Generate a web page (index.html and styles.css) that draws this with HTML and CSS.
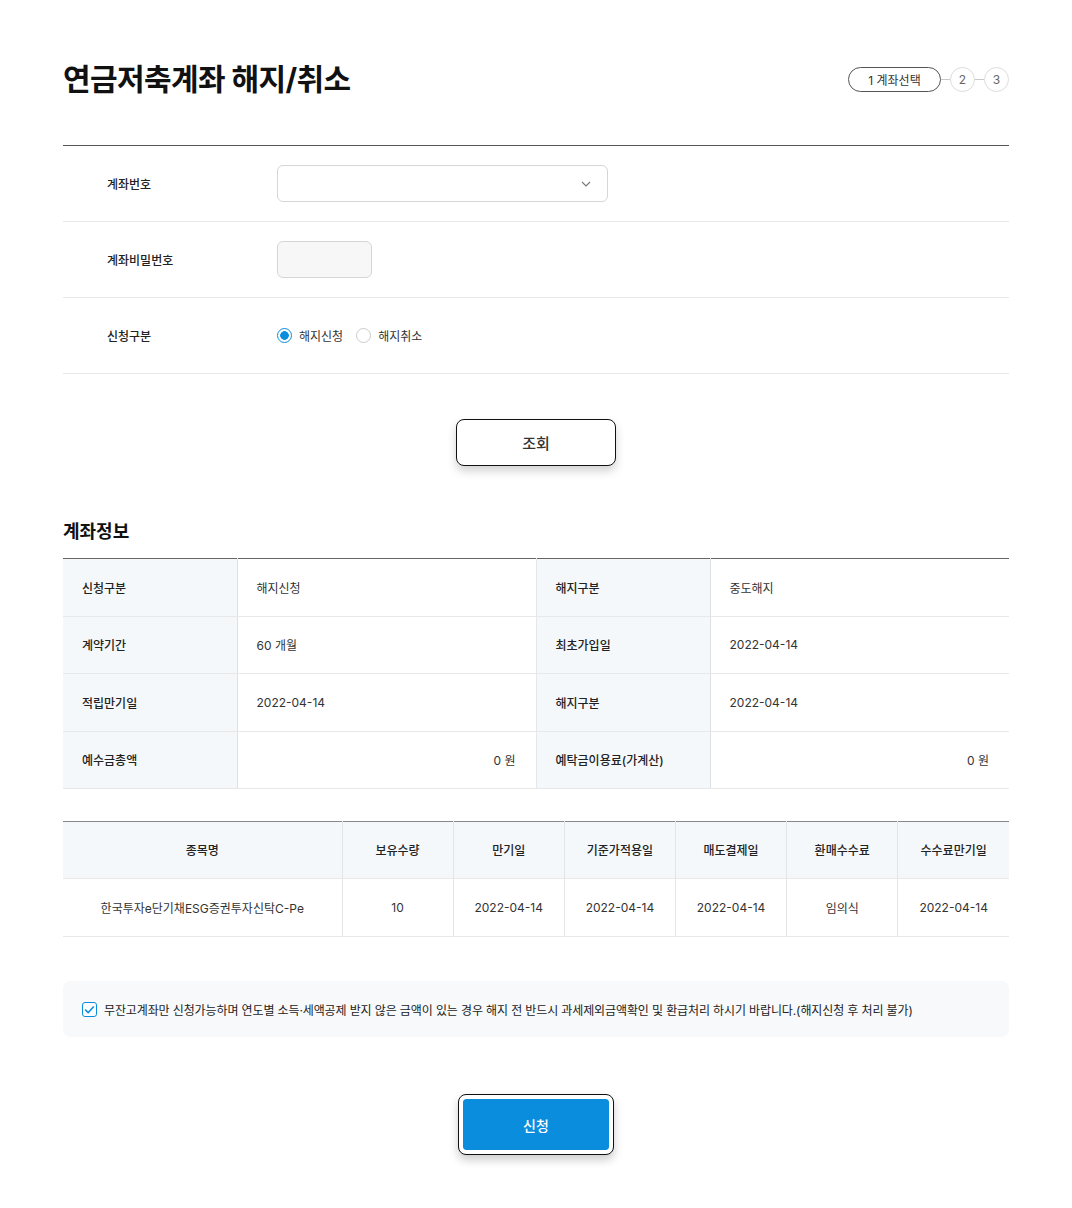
FILE: index.html
```html
<!DOCTYPE html>
<html lang="ko">
<head>
<meta charset="utf-8">
<title>연금저축계좌 해지/취소</title>
<link rel="stylesheet" href="styles.css">
</head>
<body>
<div class="page">
  <div class="header">
    <h1 class="title">연금저축계좌 해지/취소</h1>
    <div class="steps">
      <span class="step-pill">1 계좌선택</span>
      <span class="step-line"></span>
      <span class="step-circle">2</span>
      <span class="step-line"></span>
      <span class="step-circle">3</span>
    </div>
  </div>

  <div class="form">
    <div class="form-row">
      <div class="form-label">계좌번호</div>
      <div class="form-field">
        <div class="select">
          <svg class="chev" width="10" height="6" viewBox="0 0 10 6"><path d="M1 1l4 4 4-4" fill="none" stroke="#777" stroke-width="1.1"/></svg>
        </div>
      </div>
    </div>
    <div class="form-row">
      <div class="form-label">계좌비밀번호</div>
      <div class="form-field"><div class="pw"></div></div>
    </div>
    <div class="form-row">
      <div class="form-label">신청구분</div>
      <div class="form-field radios">
        <label class="radio"><span class="radio-dot on"></span>해지신청</label>
        <label class="radio"><span class="radio-dot"></span>해지취소</label>
      </div>
    </div>
  </div>

  <div class="btn-wrap">
    <button class="btn-search">조회</button>
  </div>

  <h2 class="sub-title">계좌정보</h2>
  <table class="info">
    <colgroup><col class="c-th"><col class="c-td"><col class="c-th"><col class="c-td"></colgroup>
    <tr><th>신청구분</th><td>해지신청</td><th>해지구분</th><td>중도해지</td></tr>
    <tr><th>계약기간</th><td>60 개월</td><th>최초가입일</th><td>2022-04-14</td></tr>
    <tr><th>적립만기일</th><td>2022-04-14</td><th>해지구분</th><td>2022-04-14</td></tr>
    <tr><th>예수금총액</th><td class="num">0 원</td><th>예탁금이용료(가계산)</th><td class="num">0 원</td></tr>
  </table>

  <table class="list">
    <colgroup><col class="c-name"><col><col><col><col><col><col></colgroup>
    <thead>
      <tr><th>종목명</th><th>보유수량</th><th>만기일</th><th>기준가적용일</th><th>매도결제일</th><th>환매수수료</th><th>수수료만기일</th></tr>
    </thead>
    <tbody>
      <tr><td>한국투자e단기채ESG증권투자신탁C-Pe</td><td>10</td><td>2022-04-14</td><td>2022-04-14</td><td>2022-04-14</td><td>임의식</td><td>2022-04-14</td></tr>
    </tbody>
  </table>

  <div class="notice">
    <span class="check">
      <svg width="11" height="9" viewBox="0 0 11 9"><path d="M1.2 4.6l3 3L9.8 1.4" fill="none" stroke="#0a8ddd" stroke-width="1.5"/></svg>
    </span>
    <span class="notice-text">무잔고계좌만 신청가능하며 연도별 소득·세액공제 받지 않은 금액이 있는 경우 해지 전 반드시 과세제외금액확인 및 환급처리 하시기 바랍니다.(해지신청 후 처리 불가)</span>
  </div>

  <div class="btn-wrap2">
    <button class="btn-apply">신청</button>
  </div>
</div>
</body>
</html>
```

FILE: styles.css
```css
* { box-sizing: border-box; }
body {
  margin: 0;
  background: #fff;
  font-family: Inter, "Noto Sans CJK KR", sans-serif;
  color: #222;
}
.page {
  width: 946px;
  margin: 0 auto;
  padding-top: 60px;
  padding-bottom: 50px;
}
.header {
  display: flex;
  justify-content: space-between;
  align-items: center;
  height: 38px;
}
.title {
  margin: 0;
  font-size: 30px;
  line-height: 38px;
  font-weight: 700;
  color: #111;
  letter-spacing: -0.02em;
}
.steps {
  display: flex;
  align-items: center;
}
.step-pill {
  width: 93px;
  height: 25px;
  border: 1px solid #555;
  border-radius: 13px;
  display: flex;
  align-items: center;
  justify-content: center;
  font-size: 12px;
  color: #333;
}
.step-line {
  width: 9px;
  height: 1px;
  background: #c8c8c8;
}
.step-circle {
  width: 25px;
  height: 25px;
  border: 1px solid #ddd;
  border-radius: 50%;
  display: flex;
  align-items: center;
  justify-content: center;
  font-size: 12px;
  color: #666;
}
.form {
  margin-top: 47px;
  border-top: 1px solid #555;
}
.form-row {
  display: flex;
  align-items: center;
  height: 76px;
  border-bottom: 1px solid #e8e8e8;
}
.form-label {
  width: 214px;
  padding-left: 44px;
  font-size: 12px;
  font-weight: 500;
  color: #222;
}
.form-field {
  flex: 1;
  display: flex;
  align-items: center;
}
.select {
  width: 331px;
  height: 37px;
  border: 1px solid #d6d6d6;
  border-radius: 6px;
  display: flex;
  align-items: center;
  justify-content: flex-end;
  padding-right: 16px;
}
.pw {
  width: 95px;
  height: 37px;
  border: 1px solid #d6d6d6;
  border-radius: 6px;
  background: #f7f7f7;
}
.radios { gap: 13px; }
.radio {
  display: flex;
  align-items: center;
  gap: 7px;
  font-size: 12px;
  color: #333;
}
.radio-dot {
  width: 15px;
  height: 15px;
  border: 1px solid #ccc;
  border-radius: 50%;
  background: #fff;
  display: inline-block;
}
.radio-dot.on {
  border-color: #0a8ddd;
  background: radial-gradient(circle, #0a8ddd 0 4px, #fff 4.6px);
}
.btn-wrap {
  display: flex;
  justify-content: center;
  margin-top: 45px;
}
.btn-search {
  width: 160px;
  height: 47px;
  border: 1px solid #111;
  border-radius: 8px;
  background: #fff;
  font-family: inherit;
  font-size: 15px;
  font-weight: 500;
  color: #333;
  box-shadow: 0 5px 10px rgba(0,0,0,0.18);
}
.sub-title {
  margin: 53px 0 0;
  font-size: 18px;
  line-height: 26px;
  font-weight: 700;
  color: #111;
}
table {
  width: 100%;
  border-collapse: collapse;
  table-layout: fixed;
}
.info {
  margin-top: 13px;
  border-top: 1px solid #666;
}
.info .c-th { width: 174px; }
.info th, .info td {
  height: 57.5px;
  border-bottom: 1px solid #e8e8e8;
  font-size: 12px;
  text-align: left;
  padding: 0 19px;
}
.info th {
  background: #f4f8fb;
  font-weight: 500;
  color: #222;
  border-left: 1px solid #e4e8ec;
}
.info th:first-child { border-left: none; }
.info td {
  border-left: 1px solid #dde1e5;
  color: #333;
  font-weight: 400;
}
.info td.num { text-align: right; padding-right: 20px; }
.list {
  margin-top: 32px;
  border-top: 1px solid #888;
}
.list .c-name { width: 279px; }
.list th, .list td {
  height: 58px;
  border-bottom: 1px solid #e8e8e8;
  border-left: 1px solid #e4e4e4;
  text-align: center;
  font-size: 12px;
  color: #333;
}
.list th {
  background: #f4f8fb;
  font-weight: 500;
  color: #222;
  height: 57px;
  padding-bottom: 3px;
}
.list th:first-child, .list td:first-child { border-left: none; }
.notice {
  margin-top: 44px;
  height: 56px;
  background: #f8f9fa;
  border-radius: 8px;
  display: flex;
  align-items: center;
  padding-left: 19px;
  gap: 7px;
}
.check {
  width: 15px;
  height: 15px;
  border: 1px solid #0a8ddd;
  border-radius: 3px;
  background: #fff;
  display: flex;
  align-items: center;
  justify-content: center;
}
.notice-text {
  font-size: 12px;
  color: #222;
  letter-spacing: -0.12px;
}
.btn-wrap2 {
  display: flex;
  justify-content: center;
  margin-top: 57px;
}
.btn-apply {
  width: 156px;
  height: 61px;
  border: 1px solid #111;
  border-radius: 8px;
  background: #0a8ddd;
  background-clip: content-box;
  padding: 4px;
  box-shadow: inset 0 0 0 4px #fff, 0 5px 10px rgba(0,0,0,0.2);
  font-family: inherit;
  font-size: 14px;
  font-weight: 500;
  color: #fff;
}
```
